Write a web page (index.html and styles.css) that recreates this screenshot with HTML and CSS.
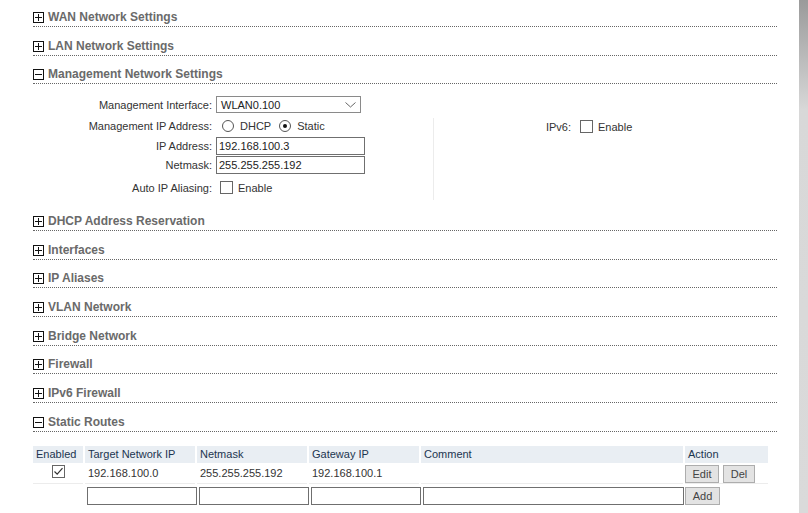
FILE: index.html
```html
<!DOCTYPE html>
<html>
<head>
<meta charset="utf-8">
<link rel="stylesheet" href="styles.css">
</head>
<body>
<div class="page">
  <div class="main">
    <div class="sec"><div class="sec-head"><span class="tog plus"></span>WAN Network Settings</div></div>
    <div class="sec"><div class="sec-head"><span class="tog plus"></span>LAN Network Settings</div></div>
    <div class="sec">
      <div class="sec-head"><span class="tog minus"></span>Management Network Settings</div>
      <div class="mgmt">
        <div class="mgmt-left">
          <div class="frow r1"><label class="lbl">Management Interface:</label>
            <div class="select"><span>WLAN0.100</span>
              <svg class="chev" width="11" height="6" viewBox="0 0 11 6"><path d="M0.5 0.5 L5.5 5 L10.5 0.5" fill="none" stroke="#666" stroke-width="1"/></svg>
            </div>
          </div>
          <div class="frow r2"><label class="lbl">Management IP Address:</label>
            <div class="opts"><span class="radio"></span><span class="opt">DHCP</span><span class="radio on"></span><span class="opt">Static</span></div>
          </div>
          <div class="frow r3"><label class="lbl">IP Address:</label><div class="input w149">192.168.100.3</div></div>
          <div class="frow r4"><label class="lbl">Netmask:</label><div class="input w149">255.255.255.192</div></div>
          <div class="frow r5"><label class="lbl">Auto IP Aliasing:</label>
            <div class="opts"><span class="check"></span><span class="opt">Enable</span></div>
          </div>
        </div>
        <div class="mgmt-right">
          <div class="frow rr"><label class="lbl lbl-r">IPv6:</label>
            <div class="opts"><span class="check"></span><span class="opt">Enable</span></div>
          </div>
        </div>
      </div>
    </div>
    <div class="sec"><div class="sec-head"><span class="tog plus"></span>DHCP Address Reservation</div></div>
    <div class="sec"><div class="sec-head"><span class="tog plus"></span>Interfaces</div></div>
    <div class="sec"><div class="sec-head"><span class="tog plus"></span>IP Aliases</div></div>
    <div class="sec"><div class="sec-head"><span class="tog plus"></span>VLAN Network</div></div>
    <div class="sec"><div class="sec-head"><span class="tog plus"></span>Bridge Network</div></div>
    <div class="sec"><div class="sec-head"><span class="tog plus"></span>Firewall</div></div>
    <div class="sec"><div class="sec-head"><span class="tog plus"></span>IPv6 Firewall</div></div>
    <div class="sec">
      <div class="sec-head"><span class="tog minus"></span>Static Routes</div>
      <table class="routes">
        <thead>
          <tr>
            <th class="c-en">Enabled</th>
            <th class="c-ip">Target Network IP</th>
            <th class="c-ip">Netmask</th>
            <th class="c-ip">Gateway IP</th>
            <th class="c-cm">Comment</th>
            <th class="c-ac">Action</th>
          </tr>
        </thead>
        <tbody>
          <tr class="data">
            <td class="center"><span class="check checked"><svg width="11" height="11" viewBox="0 0 11 11"><path d="M1.5 5.5 L4.2 8.2 L9.5 2.2" fill="none" stroke="#333" stroke-width="1.2"/></svg></span></td>
            <td>192.168.100.0</td>
            <td>255.255.255.192</td>
            <td>192.168.100.1</td>
            <td></td>
            <td><div class="btns"><button class="btn b-edit">Edit</button><button class="btn b-del">Del</button></div></td>
          </tr>
          <tr class="new">
            <td></td>
            <td><div class="input tin"></div></td>
            <td><div class="input tin"></div></td>
            <td><div class="input tin"></div></td>
            <td><div class="input tin wide"></div></td>
            <td><button class="btn b-add">Add</button></td>
          </tr>
        </tbody>
      </table>
    </div>
  </div>
  <div class="edge"></div>
</div>
</body>
</html>
```

FILE: styles.css
```css
html, body {
  margin: 0;
  padding: 0;
  background: #fff;
  font-family: "Liberation Sans", Arial, sans-serif;
  font-size: 11px;
  color: #333;
}
.page {
  display: flex;
  height: 513px;
  overflow: hidden;
}
.main {
  flex: 1;
  padding: 0 22px 0 33px;
}
.edge {
  width: 9px;
  flex: none;
  background: linear-gradient(to bottom, #9a9a9a 0px, #d8d8d8 110px, #dadada 513px);
}
.sec + .sec { margin-top: 1.67px; }
.sec-head {
  box-sizing: border-box;
  height: 27px;
  padding-top: 9px;
  line-height: 17px;
  border-bottom: 1px dotted #666;
  font-size: 12px;
  font-weight: bold;
  color: #6a6a6a;
  display: flex;
  align-items: center;
}
.tog {
  position: relative;
  box-sizing: border-box;
  width: 11px;
  height: 11px;
  border: 1px solid #111;
  margin-right: 4px;
  flex: none;
}
.tog::before {
  content: "";
  position: absolute;
  left: 1px;
  top: 4px;
  width: 7px;
  height: 1px;
  background: #111;
}
.tog.plus::after {
  content: "";
  position: absolute;
  left: 4px;
  top: 1px;
  width: 1px;
  height: 7px;
  background: #111;
}

/* management */
.mgmt {
  display: flex;
  padding-top: 10px;
  padding-bottom: 2px;
}
.mgmt-left { width: 400px; flex: none; }
.mgmt-right {
  flex: 1;
  border-left: 1px solid #ececec;
  margin-top: 24px;
  height: 82px;
}
.frow {
  display: flex;
  align-items: center;
}
.r1 { height: 21px; }
.r2 { height: 21px; }
.r3 { height: 19px; }
.r4 { height: 20px; }
.r5 { height: 25px; }
.rr { height: 17px; }
.lbl {
  width: 179px;
  text-align: right;
  padding-right: 4px;
  flex: none;
  color: #333;
}
.lbl-r { width: 137px; padding-right: 5px; }
.select {
  box-sizing: border-box;
  width: 145px;
  height: 17px;
  border: 1px solid #8a8a8a;
  display: flex;
  align-items: center;
  justify-content: space-between;
  padding: 0 4px 0 4px;
  color: #222;
}
.chev { margin-top: 1px; }
.opts {
  display: flex;
  align-items: center;
}
.radio {
  box-sizing: border-box;
  width: 12px;
  height: 12px;
  border: 1px solid #555;
  border-radius: 50%;
  margin-left: 6px;
  margin-right: 6px;
  position: relative;
}
.radio.on::after {
  content: "";
  position: absolute;
  left: 3px;
  top: 3px;
  width: 4px;
  height: 4px;
  border-radius: 50%;
  background: #111;
}
.opt + .radio { margin-left: 8px; }
.check {
  box-sizing: border-box;
  width: 13px;
  height: 13px;
  border: 1px solid #666;
  background: #fff;
  margin-left: 4px;
  margin-right: 5px;
  display: inline-flex;
  align-items: center;
  justify-content: center;
}
.input {
  box-sizing: border-box;
  height: 18px;
  border: 1px solid #6f6f6f;
  padding: 0 2px;
  line-height: 16px;
  color: #222;
}
.w149 { width: 149px; }

/* table */
.routes {
  margin-top: 12.5px;
  margin-left: -2px;
  border-spacing: 2px;
  table-layout: fixed;
  width: 739px;
}
.routes th {
  box-sizing: border-box;
  background: #e9eef3;
  color: #1c3550;
  font-weight: normal;
  text-align: left;
  padding: 2px 3px;
  line-height: 13px;
  height: 17px;
}
.c-en { width: 50px; }
.c-ip { width: 110px; }
.c-cm { width: 262px; }
.c-ac { width: 83px; }
.routes td {
  padding: 0 3px;
  vertical-align: top;
}
.routes tr.data td {
  box-sizing: border-box;
  height: 19px;
  border-bottom: 1px solid #ececec;
  padding-top: 0;
  line-height: 17px;
}
.routes tr.data td.center { text-align: center; }
.routes tr.data .check { margin: 0 0 0 1px; vertical-align: top; }
.routes tr.new td { padding: 1px 0 0 2px; }
.tin { width: 110px; height: 18px; }
.tin.wide { width: 261px; }
.btns { display: flex; gap: 4px; }
.btn {
  box-sizing: border-box;
  height: 18px;
  padding: 0;
  border: 1px solid #adadad;
  background: #e3e3e3;
  font-family: "Liberation Sans", Arial, sans-serif;
  font-size: 11px;
  color: #444;
  line-height: 16px;
  display: block;
}
.b-edit { width: 34px; }
.b-del { width: 32px; }
.b-add { width: 35px; margin-left: 0; }
.routes tr.data td:last-child { padding-left: 0; }
.routes tr.new td:last-child { padding-left: 0; }
```
